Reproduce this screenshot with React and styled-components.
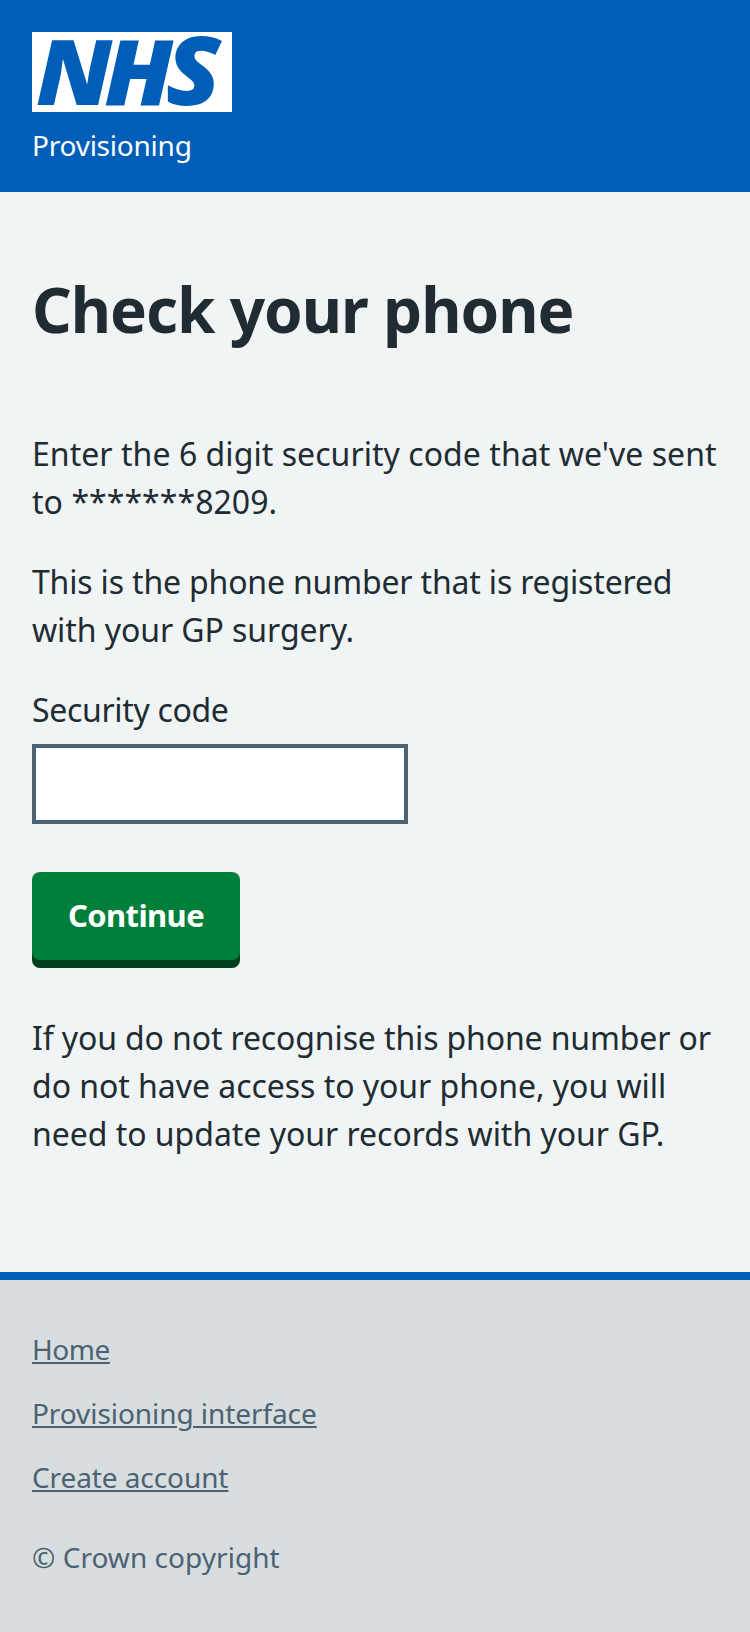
import React from "react";
import styled, { createGlobalStyle } from "styled-components";

const GlobalStyle = createGlobalStyle`
  *, *::before, *::after { box-sizing: border-box; }
  body {
    margin: 0;
    background: #f0f4f5;
    color: #212b32;
    font-family: "Noto Sans", "Open Sans", sans-serif;
    -webkit-font-smoothing: antialiased;
  }
`;

const Page = styled.div`
  display: flex;
  flex-direction: column;
  min-height: 1632px;
`;

const Header = styled.header`
  height: 192px;
  padding: 32px;
  background: #005eb8;
  color: #fff;
`;

const Logo = styled.svg`
  display: block;
  width: 200px;
  height: 80px;
  overflow: visible;
  background: #fff;
`;

const LogoText = styled.text`
  font-family: "Open Sans", "Noto Sans", sans-serif;
  font-size: 91px;
  font-weight: 800;
  font-style: italic;
  fill: #005eb8;
`;

const ServiceName = styled.div`
  margin-top: 13px;
  font-size: 28px;
  line-height: 40px;
  letter-spacing: -0.23px;
`;

const Main = styled.main`
  padding: 81px 32px 114px;
`;

const Heading = styled.h1`
  margin: 0 0 85px;
  font-size: 62px;
  line-height: 73px;
  font-weight: 700;
  letter-spacing: -1px;

  & + p {
    margin-top: -1px;
  }
`;

const Paragraph = styled.p`
  margin: 0 0 32px;
  font-size: 32px;
  line-height: 48px;
  white-space: nowrap;

  &:last-child {
    margin-bottom: 0;
  }
`;

const Line = styled.span`
  display: block;
  letter-spacing: ${(p) => p.$tracking || 0}px;
`;

const Label = styled.label`
  display: block;
  margin-bottom: 10px;
  font-size: 32px;
  line-height: 48px;
  letter-spacing: -0.33px;
`;

const Input = styled.input`
  display: block;
  width: 376px;
  height: 80px;
  margin: 0 0 48px;
  padding: 8px;
  border: 4px solid #4c6272;
  border-radius: 0;
  background: #fff;
  font: inherit;
  font-size: 32px;
  outline: none;
`;

const Button = styled.button`
  display: block;
  width: 208px;
  height: 88px;
  margin: 0 0 54px;
  padding: 0 0 3px;
  border: 0;
  border-radius: 8px;
  background: #007f3b;
  box-shadow: 0 8px 0 #00401e;
  color: #fff;
  font: inherit;
  font-size: 31px;
  font-weight: 700;
  letter-spacing: -0.6px;
`;

const Footer = styled.footer`
  flex: 1;
  padding: 49px 32px 0;
  border-top: 8px solid #005eb8;
  background: #d8dde0;
  color: #4c6272;
  font-size: 28px;
  line-height: 40px;
`;

const LinkList = styled.ul`
  display: flex;
  flex-direction: column;
  align-items: flex-start;
  gap: 24px;
  margin: 0 0 40px;
  padding: 0;
  list-style: none;
`;

const FooterLink = styled.a`
  color: inherit;
  text-decoration: underline;
  text-decoration-thickness: 2px;
  text-underline-offset: 2px;
  letter-spacing: ${(p) => p.$tracking || 0}px;
`;

const Copyright = styled.p`
  margin: 0;
  letter-spacing: 0.04px;
`;

export default function App() {
  return (
    <Page>
      <GlobalStyle />
      <Header>
        <Logo viewBox="0 0 200 80" role="img" aria-label="NHS">
          <LogoText transform="translate(0 72.5) scale(1.06 1)">
            <tspan x="3.7">N</tspan>
            <tspan x="68.1">H</tspan>
            <tspan x="126.3" y="0.5" fontSize="95">S</tspan>
          </LogoText>
        </Logo>
        <ServiceName>Provisioning</ServiceName>
      </Header>
      <Main>
        <Heading>Check your phone</Heading>
        <Paragraph>
          <Line $tracking={0.05}>Enter the 6 digit security code that we've sent</Line>
          <Line $tracking={0.05}>to *******8209.</Line>
        </Paragraph>
        <Paragraph>
          <Line $tracking={-0.17}>This is the phone number that is registered</Line>
          <Line $tracking={-0.07}>with your GP surgery.</Line>
        </Paragraph>
        <Label htmlFor="code">Security code</Label>
        <Input id="code" type="text" />
        <Button type="button">Continue</Button>
        <Paragraph>
          <Line $tracking={-0.13}>If you do not recognise this phone number or</Line>
          <Line $tracking={-0.04}>do not have access to your phone, you will</Line>
          <Line $tracking={-0.03}>need to update your records with your GP.</Line>
        </Paragraph>
      </Main>
      <Footer>
        <LinkList>
          <li><FooterLink href="#" $tracking={-0.45}>Home</FooterLink></li>
          <li><FooterLink href="#" $tracking={-0.07}>Provisioning interface</FooterLink></li>
          <li><FooterLink href="#" $tracking={-0.09}>Create account</FooterLink></li>
        </LinkList>
        <Copyright>© Crown copyright</Copyright>
      </Footer>
    </Page>
  );
}
